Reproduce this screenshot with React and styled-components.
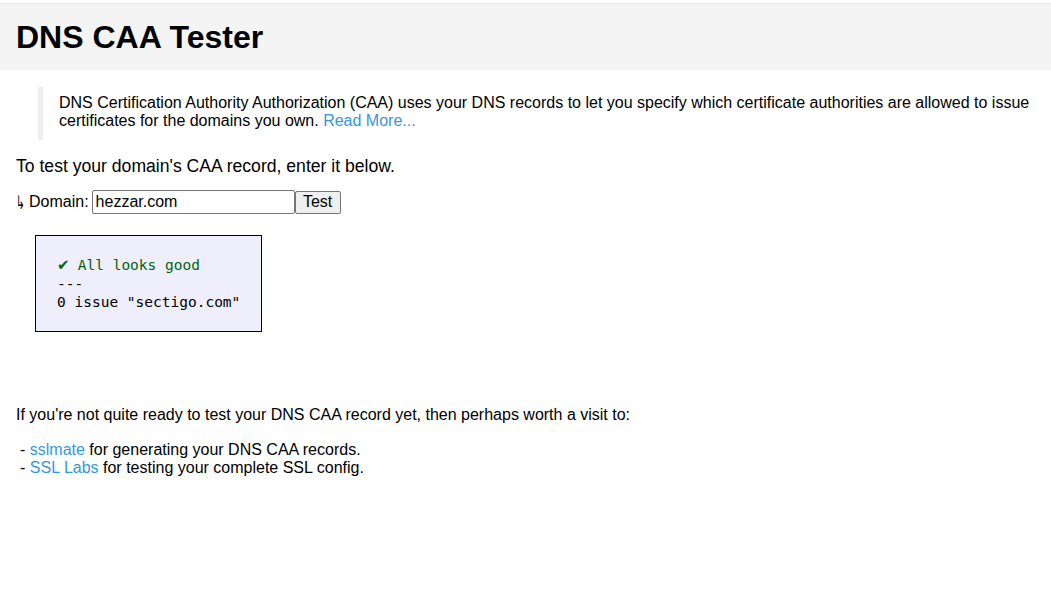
import React, { useState } from 'react'
import styled, { createGlobalStyle } from 'styled-components'

const GlobalStyle = createGlobalStyle`
    body {
        margin: 0;
        background: #fff;
        color: #000;
        font-family: "Liberation Sans", Arial, sans-serif;
        font-size: 16px;
    }
`

const Header = styled.header`
    margin-top: 3px;
    border-top: 1px solid #dde9ec;
    background: #f4f4f4;
    padding: 15px 16px 14px;
`

const Title = styled.h1`
    margin: 0;
    font-size: 32px;
    font-weight: bold;
    line-height: 37px;
`

const Main = styled.main`
    padding: 0 16px;
`

const Intro = styled.blockquote`
    margin: 17px 0 0 22px;
    padding: 7px 0 10px 16px;
    border-left: 5px solid #eeeeee;
    line-height: 18px;
`

const Link = styled.a`
    color: #3498db;
    text-decoration: none;
`

const Lead = styled.p`
    margin: 16px 0 0;
    font-size: 17.6px;
`

const Form = styled.form`
    display: flex;
    align-items: center;
    margin-top: 13px;
    height: 24px;
`

const Label = styled.label`
    display: flex;
    align-items: center;
    margin-right: 3px;
`

const Arrow = styled.span`
    display: inline-block;
    width: 10px;
    margin-right: 3px;
    font-family: "DejaVu Sans", sans-serif;
    font-size: 19px;
    line-height: 1;
    transform: scaleX(0.55);
    transform-origin: left center;
`

const Input = styled.input`
    box-sizing: border-box;
    width: 203px;
    height: 24px;
    padding: 1px 3px;
    border: 1px solid #767676;
    border-radius: 2px;
    font-family: "Liberation Sans", Arial, sans-serif;
    font-size: 16px;
    color: #000;
`

const Button = styled.button`
    box-sizing: border-box;
    width: 46px;
    height: 23px;
    padding: 0 6px;
    border: 1px solid #767676;
    border-radius: 2px;
    background: #efefef;
    font-family: "Liberation Sans", Arial, sans-serif;
    font-size: 16px;
    color: #000;
`

const Result = styled.pre`
    box-sizing: border-box;
    width: 227px;
    margin: 21px 0 0 19px;
    padding: 20px 21px 19px;
    border: 1px solid #000;
    background: #eeeefd;
    font-family: "DejaVu Sans Mono", "Liberation Mono", monospace;
    font-size: 14.5px;
    line-height: 18.5px;
`

const Good = styled.span`
    color: #00640a;
`

const Check = styled.span`
    display: inline-block;
    width: 12px;
    font-family: "DejaVu Sans", sans-serif;
    font-size: 15px;
    line-height: 1;
`

const Footer = styled.div`
    margin-top: 74px;
    line-height: 18px;
`

const Para = styled.p`
    margin: 0;
`

const Links = styled.div`
    margin-top: 17px;
    padding-left: 4px;
`

export default function App() {
    const [domain, setDomain] = useState('hezzar.com')

    return (
        <>
            <GlobalStyle />
            <Header>
                <Title>DNS CAA Tester</Title>
            </Header>
            <Main>
                <Intro>
                    DNS Certification Authority Authorization (CAA) uses your DNS records to let you specify which certificate authorities are allowed to issue certificates for the domains you own. <Link href="#">Read More...</Link>
                </Intro>
                <Lead>To test your domain's CAA record, enter it below.</Lead>
                <Form onSubmit={e => e.preventDefault()}>
                    <Label htmlFor="domain"><Arrow>↳</Arrow>Domain:</Label>
                    <Input id="domain" type="text" value={domain} onChange={e => setDomain(e.target.value)} />
                    <Button type="submit">Test</Button>
                </Form>
                <Result>
                    <Good><Check>✔</Check> All looks good</Good>{'\n'}---{'\n'}0 issue "sectigo.com"
                </Result>
                <Footer>
                    <Para>If you're not quite ready to test your DNS CAA record yet, then perhaps worth a visit to:</Para>
                    <Links>
                        <div>- <Link href="#">sslmate</Link> for generating your DNS CAA records.</div>
                        <div>- <Link href="#">SSL Labs</Link> for testing your complete SSL config.</div>
                    </Links>
                </Footer>
            </Main>
        </>
    )
}
